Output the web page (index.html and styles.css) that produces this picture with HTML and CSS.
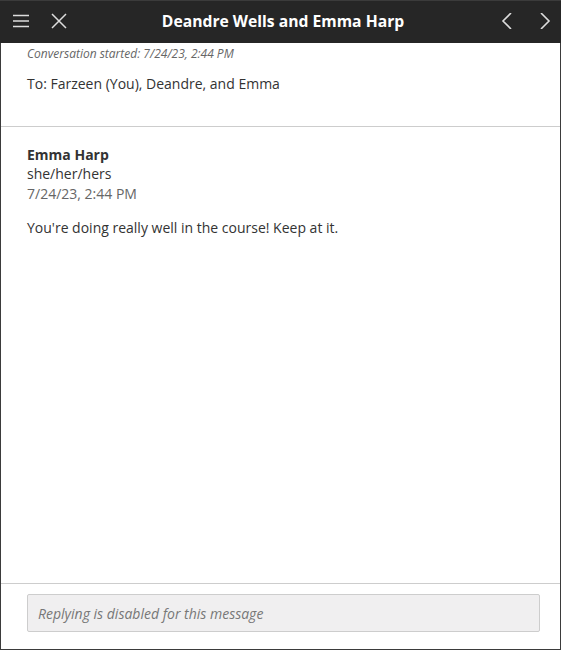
FILE: index.html
```html
<!DOCTYPE html>
<html lang="en">
<head>
    <meta charset="UTF-8">
    <meta name="viewport" content="width=device-width, initial-scale=1.0">
    <title>Deandre Wells and Emma Harp</title>
    <link rel="stylesheet" href="styles.css">
</head>
<body>
    <div class="panel">
        <header class="topbar">
            <div class="tools tools-left">
                <button class="icon-btn" aria-label="Menu">
                    <svg width="16" height="16" viewBox="0 0 16 16"><path d="M0 2.5h16M0 8h16M0 13.5h16" stroke="#ddd" stroke-width="1.6" fill="none"/></svg>
                </button>
                <button class="icon-btn" aria-label="Close">
                    <svg width="16" height="16" viewBox="0 0 16 16"><path d="M1 1l14 14M15 1L1 15" stroke="#ddd" stroke-width="1.5" fill="none"/></svg>
                </button>
            </div>
            <h1 class="title">Deandre Wells and Emma Harp</h1>
            <div class="tools tools-right">
                <button class="icon-btn" aria-label="Previous">
                    <svg width="16" height="16" viewBox="0 0 16 16"><path d="M12 0L4 8l8 8" stroke="#ddd" stroke-width="1.6" fill="none"/></svg>
                </button>
                <button class="icon-btn" aria-label="Next">
                    <svg width="16" height="16" viewBox="0 0 16 16"><path d="M4 0l8 8-8 8" stroke="#ddd" stroke-width="1.6" fill="none"/></svg>
                </button>
            </div>
        </header>

        <main class="thread">
            <section class="thread-head">
                <p class="started">Conversation started: 7/24/23, 2:44 PM</p>
                <p class="recipients">To: Farzeen (You), Deandre, and Emma</p>
            </section>

            <article class="message">
                <div class="author">Emma Harp</div>
                <div class="pronouns">she/her/hers</div>
                <div class="stamp">7/24/23, 2:44 PM</div>
                <p class="body">You're doing really well in the course! Keep at it.</p>
            </article>
        </main>

        <footer class="reply">
            <div class="reply-box">Replying is disabled for this message</div>
        </footer>
    </div>
</body>
</html>
```

FILE: styles.css
```css
* {
    box-sizing: border-box;
}
body {
    margin: 0;
    font-family: "Open Sans", sans-serif;
    color: #333;
    background: #fff;
}
.panel {
    width: 561px;
    height: 650px;
    border: 1px solid #3b3b3b;
    border-top: 0;
    display: flex;
    flex-direction: column;
}
.topbar {
    height: 43px;
    background: #262626;
    border-top: 1px solid #3b3b3b;
    display: flex;
    align-items: center;
    margin: 0 -1px;
    padding-bottom: 2px;
}
.tools {
    display: flex;
    align-items: center;
}
.tools-left {
    padding-left: 13px;
    gap: 22px;
}
.tools-right {
    padding-right: 8px;
    gap: 22px;
}
.icon-btn {
    background: none;
    border: none;
    padding: 0;
    width: 16px;
    height: 16px;
    display: block;
    cursor: pointer;
}
.icon-btn svg {
    display: block;
}
.title {
    flex: 1;
    margin: 0;
    text-align: center;
    color: #fff;
    font-size: 15.7px;
    font-weight: 700;
}
.thread {
    flex: 1;
}
.thread-head {
    padding: 0 26px;
    height: 84px;
    border-bottom: 1px solid #cdcdcd;
}
.started {
    margin: 0;
    padding-top: 2px;
    font-size: 12px;
    font-style: italic;
    color: #666;
    line-height: 18px;
}
.recipients {
    margin: 11px 0 0;
    font-size: 14px;
    line-height: 20px;
}
.message {
    padding: 18px 26px;
    font-size: 14px;
    line-height: 19px;
}
.author {
    font-weight: 700;
}
.pronouns {
    margin-bottom: 1px;
}
.stamp {
    color: #666;
}
.body {
    margin: 15px 0 0;
}
.reply {
    border-top: 1px solid #cdcdcd;
    padding: 10px 20px 17px 26px;
}
.reply-box {
    height: 38px;
    background: #f0eff0;
    border: 1px solid #cdcdcd;
    border-radius: 2px;
    padding: 0 10px;
    display: flex;
    align-items: center;
    font-size: 14px;
    font-style: italic;
    color: #777;
}
```
